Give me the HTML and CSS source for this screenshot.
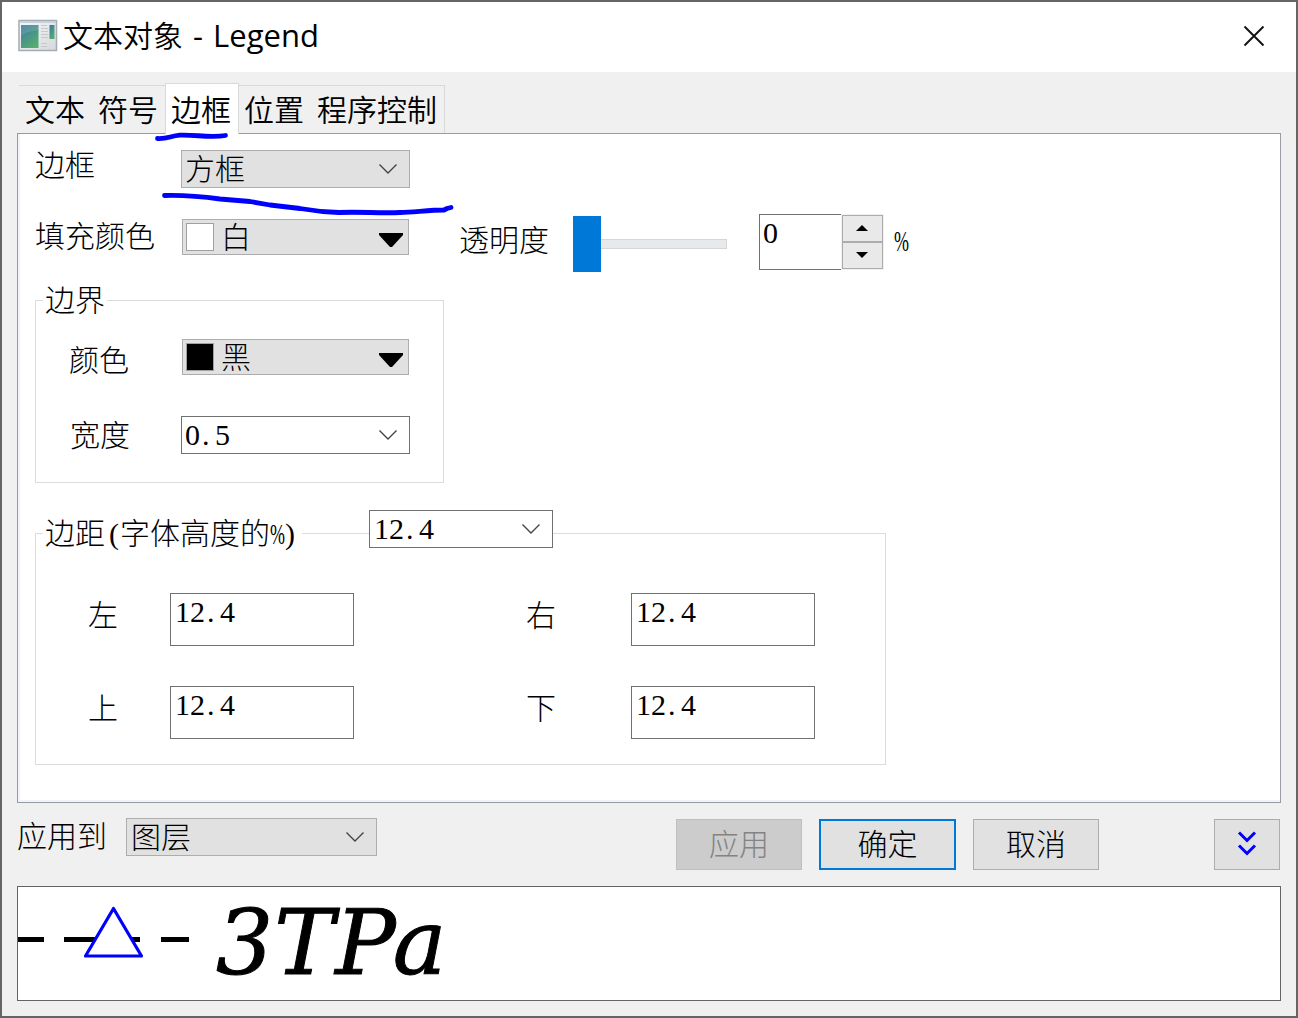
FILE: index.html
```html
<!DOCTYPE html>
<html lang="zh-CN">
<head>
<meta charset="utf-8">
<title>文本对象 - Legend</title>
<link rel="stylesheet" href="styles.css">
</head>
<body>
<div class="window">
  <header class="titlebar">
    <svg class="app-icon" width="40" height="34" viewBox="0 0 40 34">
      <defs>
        <linearGradient id="pane" x1="0" y1="0" x2=".6" y2="1"><stop offset="0" stop-color="#3d78a4"/><stop offset="1" stop-color="#55ab72"/></linearGradient>
        <linearGradient id="frame" x1="0" y1="0" x2="1" y2="1"><stop offset="0" stop-color="#f8f8f8"/><stop offset="1" stop-color="#d5d8dc"/></linearGradient>
      </defs>
      <rect x="1" y="1.500" width="37.500" height="30" fill="url(#frame)" stroke="#a5abb1" stroke-width="1.500"/>
      <path d="M2 3h36" stroke="#c3d2df" stroke-width="2"/>
      <rect x="3" y="6" width="17.500" height="23" fill="url(#pane)"/>
      <path d="M3 17q6-5 17.500-6V6H3z" fill="#fff" opacity=".12"/>
      <path d="M23 6.500h6M23 9.500h7M23 12.500h7M23 15.500h7M23 18.500h7M23 24.500h6M23 27.500h6" stroke="#c6c9cc"/>
      <rect x="31.500" y="6" width="5" height="14" fill="url(#pane)"/>
    </svg>
    <h1 class="title">文本对象<span class="title-latin"> - Legend</span></h1>
    <svg class="close" width="22" height="22" viewBox="0 0 22 22"><path d="M1.500 1.500l19 19M20.500 1.500l-19 19" stroke="#111" stroke-width="1.900"/></svg>
  </header>
  <nav class="tabs">
    <span class="tab">文本</span><span class="tab">符号</span><span class="tab active">边框</span><span class="tab">位置</span><span class="tab last">程序控制</span>
  </nav>
  <main class="panel">
    <div class="row row-border">
      <span class="label">边框</span>
      <div class="combo gray w229"><span>方框</span><svg class="chev" viewBox="0 0 18 10"><path d="M.5.500L9 9 17.500.500"/></svg></div>
    </div>
    <div class="row row-fill">
      <span class="label">填充颜色</span>
      <div class="swatch-btn"><i class="swatch"></i><span>白</span><svg class="tri" viewBox="0 0 24 15"><path d="M0 0h24v2L13 14h-2L0 2z"/></svg></div>
      <span class="label opacity-label">透明度</span>
      <div class="slider"><i class="thumb"></i><i class="track"></i></div>
      <div class="spin"><span class="spin-value">0</span>
        <div class="spin-buttons"><i class="step"><svg viewBox="0 0 12 6"><path d="M0 6L6 0l6 6z"/></svg></i><i class="step"><svg viewBox="0 0 12 6"><path d="M0 0l6 6 6-6z"/></svg></i></div>
      </div>
      <span class="percent"><span class="pct">%</span></span>
    </div>
    <section class="group edge">
      <h2 class="legend">边界</h2>
      <div class="row row-color">
        <span class="label">颜色</span>
        <div class="swatch-btn"><i class="swatch black"></i><span>黑</span><svg class="tri" viewBox="0 0 24 15"><path d="M0 0h24v2L13 14h-2L0 2z"/></svg></div>
      </div>
      <div class="row row-width">
        <span class="label">宽度</span>
        <div class="combo w229"><span>0<b class="dot">.</b>5</span><svg class="chev" viewBox="0 0 18 10"><path d="M.5.500L9 9 17.500.500"/></svg></div>
      </div>
    </section>
    <section class="group margins">
      <div class="margin-head">
        <h2 class="legend">边距<span class="paren open">(</span>字体高度的<span class="pct">%</span><span class="paren">)</span></h2>
        <div class="combo w184"><span>12<b class="dot">.</b>4</span><svg class="chev" viewBox="0 0 18 10"><path d="M.5.500L9 9 17.500.500"/></svg></div>
      </div>
      <div class="fields">
        <span class="label">左</span><div class="field">12<b class="dot">.</b>4</div>
        <span class="label">右</span><div class="field">12<b class="dot">.</b>4</div>
        <span class="label">上</span><div class="field">12<b class="dot">.</b>4</div>
        <span class="label">下</span><div class="field">12<b class="dot">.</b>4</div>
      </div>
    </section>
  </main>
  <div class="actions">
    <span class="label apply-label">应用到</span>
    <div class="combo gray w251"><span>图层</span><svg class="chev" viewBox="0 0 18 10"><path d="M.5.500L9 9 17.500.500"/></svg></div>
    <div class="btn disabled">应用</div>
    <div class="btn primary">确定</div>
    <div class="btn cancel">取消</div>
    <div class="btn more"><svg width="20" height="30" viewBox="0 0 20 30"><path d="M2 2.500l8 8 8-8M2 15.500l8 8 8-8" fill="none" stroke="#00f" stroke-width="3"/></svg></div>
  </div>
  <div class="preview">
    <svg width="172" height="112" viewBox="0 0 172 112">
      <path d="M0 52.500h26M46 52.500h28M117 52.500h5M143 52.500h28" stroke="#000" stroke-width="5"/>
      <path d="M95.500 21.500L67.500 69h56z" fill="#fff"/>
      <path d="M74 52.500h12M112 52.500h10" stroke="#000" stroke-width="5"/>
      <path d="M95.500 21.500L67.500 69h56z" fill="#fff" stroke="#00f" stroke-width="3.200" stroke-linejoin="round"/>
    </svg>
    <span class="preview-text">3TPa</span>
  </div>
</div>
<svg class="ink" width="320" height="100" viewBox="150 120 320 100">
  <path d="M157.500 138.500C168 139 170 136 180 135.200C195 134.500 210 138 225.500 135.500"/>
  <path d="M164.500 195.500C185 195 202 196.500 220 199L250 201.500L270 205L300 208.500Q320 212 339 212.500C360 211.500 380 213.500 400 212.500C415 212 430 210 444 210L447 208.500L451 207.500"/>
</svg>
</body>
</html>
```
FILE: styles.css
```css
* { box-sizing: border-box; }
body {
  margin: 0;
  width: 1298px;
  height: 1018px;
  overflow: hidden;
  font: 300 30px/30px "Liberation Serif", "Noto Sans CJK SC", serif;
  color: #000;
}
h1, h2 { margin: 0; font: inherit; }
i { display: block; }
.window {
  width: 1298px;
  height: 1018px;
  border: 2px solid #656565;
  background: #f0f0f0;
}
.titlebar {
  display: flex;
  align-items: center;
  height: 70px;
  padding: 0 31px 2px 16px;
  background: #fff;
  font-family: "Noto Sans CJK SC", sans-serif;
}
.app-icon { margin-right: 5px; }
.title { flex: 1; padding-bottom: 4px; line-height: 40px; white-space: pre; font-weight: 350; }
.title-latin { font: 400 31px/40px "Open Sans", sans-serif; word-spacing: 2px; }
.tabs {
  display: flex;
  align-items: flex-end;
  height: 61px;
  padding-left: 17px;
  font-family: "Noto Sans CJK SC", sans-serif;
  font-weight: 350;
}
.tab {
  width: 73px;
  height: 48px;
  padding: 7px 0 0 6px;
  border-top: 1px solid #d9d9d9;
}
.tab.active {
  width: 74px;
  height: 51px;
  margin-bottom: -1px;
  padding: 9px 0 0 5px;
  border: 1px solid #d9d9d9;
  border-bottom: 0;
  background: #fff;
  position: relative;
}
.active + .tab { padding-left: 5px; }
.tab.last { width: 133px; border-right: 1px solid #d9d9d9; padding-left: 5px; }
.panel {
  width: 1264px;
  height: 670px;
  margin-left: 15px;
  padding: 16px 0 0 17px;
  border: 1px solid #9a9ca3;
  box-shadow: inset 2px -2px #f1f3fb;
  background: #fff;
}
.row { display: flex; align-items: flex-start; }
.label { flex: none; width: 145px; white-space: nowrap; }
.row-border { height: 64px; }
.row-border .label { width: 146px; padding-top: 1px; }
.combo {
  display: flex;
  align-items: center;
  justify-content: space-between;
  height: 38px;
  padding: 0 12px 0 4px;
  border: 1px solid #707070;
  background: #fff;
}
.gray { border-color: #adadad; background: #e1e1e1; }
.gray span { padding-top: 2px; }
.w229 { width: 229px; padding-left: 3px; }
.w184 { width: 184px; }
.w251 { width: 251px; }
.chev { width: 18px; height: 10px; fill: none; stroke: #444; stroke-width: 1.400; }
.dot { display: inline-block; width: 15px; padding-left: 2px; font-weight: 400; }
.row-fill { height: 86px; }
.row-fill > .label { width: 147px; padding-top: 8px; }
.swatch-btn {
  display: flex;
  align-items: center;
  width: 227px;
  height: 36px;
  margin-top: 5px;
  padding: 0 5px 0 3px;
  border: 1px solid #adadad;
  background: #e1e1e1;
}
.swatch-btn span { padding-top: 2px; }
.swatch { width: 28px; height: 28px; margin-right: 7px; border: 1px solid #a0a0a0; background: #fff; }
.swatch.black { background: #000; }
.tri { width: 24px; height: 15px; margin: 6px 0 0 auto; }
.row-fill > .opacity-label { width: 114px; margin-left: 50px; padding-top: 12px; }
.slider { display: flex; align-items: center; height: 56px; margin-top: 2px; }
.thumb { width: 28px; height: 56px; background: #0078d7; }
.track { width: 126px; height: 10px; border: 1px solid #d6d6d6; border-left: 0; background: #e7eaea; }
.spin { display: flex; width: 125px; height: 56px; margin-left: 32px; }
.spin-value { width: 82px; padding: 3px 0 0 3px; border: 1px solid #707070; border-right: 0; }
.spin-buttons { width: 43px; padding: 1px; background: #f0f0f0; }
.step {
  display: flex;
  align-items: center;
  justify-content: center;
  height: 27px;
  padding: 0 1px 2px 0;
  border: 1px solid #acacac;
  background: #e9e9e9;
}
.step svg { width: 12px; height: 6px; }
.percent { padding: 12px 0 0 10px; }
.pct { display: inline-block; width: 15px; transform: scaleX(.6); transform-origin: 0 50%; }
.group { border: 1px solid #dcdcdc; }
.legend { background: #fff; white-space: nowrap; }
.edge { width: 409px; height: 183px; }
.edge .legend { width: 64px; margin: -15px 0 0 7px; padding-left: 2px; }
.row-color { margin-top: 18px; padding-left: 33px; }
.row-color .label, .row-width .label { width: 113px; }
.row-color .label { padding-top: 12px; }
.row-width { margin-top: 40px; padding-left: 34px; }
.row-width .label { width: 111px; padding-top: 5px; }
.margins { width: 851px; height: 232px; margin-top: 50px; }
.margin-head { display: flex; margin: -24px 0 0 7px; }
.margin-head .legend { width: 259px; margin: 9px 67px 0 0; padding-left: 2px; }
.paren { display: inline-block; width: 15px; }
.open { padding-left: 4px; }
.fields {
  display: grid;
  grid-template-columns: 82px 184px 277px 184px;
  grid-auto-rows: 53px;
  row-gap: 40px;
  margin: 44px 0 0 52px;
}
.fields .label { width: auto; padding: 8px 0 0 0; }
.fields .label:nth-child(4n+3) { padding-left: 172px; }
.field { padding: 3px 0 0 4px; border: 1px solid #707070; }
.actions { display: flex; height: 83px; padding: 15px 16px 0 15px; }
.apply-label { width: 109px; padding-top: 4px; }
.btn {
  display: flex;
  align-items: center;
  justify-content: center;
  width: 126px;
  height: 51px;
  margin-top: 1px;
  border: 1px solid #adadad;
  background: #e1e1e1;
}
.disabled { margin-left: 299px; border-color: #bfbfbf; background: #ccc; color: #838383; }
.primary { width: 137px; margin-left: 17px; border: 2px solid #0078d7; }
.cancel { margin-left: 17px; }
.more { width: 66px; margin-left: auto; }
.preview {
  display: flex;
  width: 1264px;
  height: 115px;
  margin-left: 15px;
  border: 1px solid #646464;
  background: #fff;
}
.preview-text {
  margin: 0 0 0 26px;
  font: italic 400 90px/112px "DejaVu Serif", serif;
  letter-spacing: 1px;
  -webkit-text-stroke: 1px #000;
}
.ink { position: absolute; left: 150px; top: 120px; fill: none; stroke: #00f; stroke-width: 4.800; stroke-linecap: round; stroke-linejoin: round; }
```
